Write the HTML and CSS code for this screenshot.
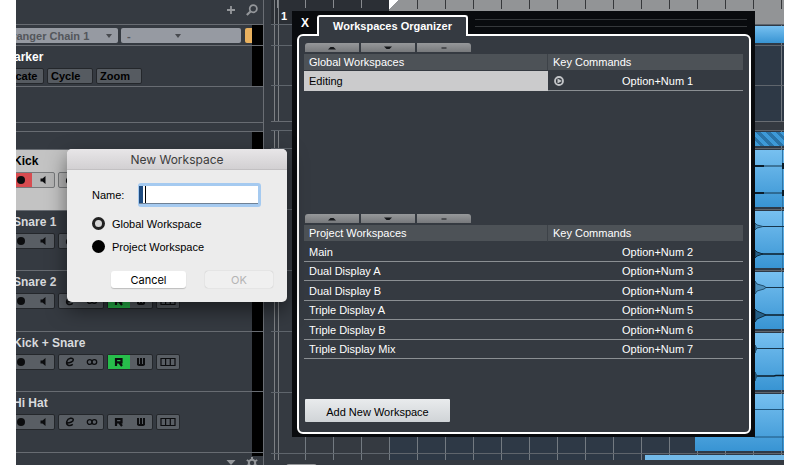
FILE: index.html
```
<!DOCTYPE html>
<html lang="en">
	<head>
		<meta charset="utf-8">
		<title>Workspaces Organizer</title>
		<link rel="stylesheet" href="styles.css">
	</head>
	<body>
		<svg class="symbols" aria-hidden="true">
			<symbol id="rec" viewBox="0 0 12 12"><circle cx="6" cy="6" r="4"/></symbol>
			<symbol id="speaker" viewBox="0 0 12 12"><path d="M3.500 4.500h2L8.500 2v8L5.500 7.500h-2z"/></symbol>
			<symbol id="edit" viewBox="0 0 12 12"><path d="M2.800 7C6 6.800 9.600 5.600 9.300 3.600C8.800 1.400 4 1.800 2.800 5.400C1.800 9.600 5.500 10.600 8.800 8.400" fill="none" stroke="currentColor" stroke-width="1.500"/></symbol>
			<symbol id="stereo" viewBox="0 0 12 12"><circle cx="3.700" cy="6" r="2.400" fill="none" stroke="currentColor" stroke-width="1.300"/><circle cx="8.300" cy="6" r="2.400" fill="none" stroke="currentColor" stroke-width="1.300"/></symbol>
			<symbol id="read" viewBox="0 0 12 12"><path d="M3 10V3h5.500v3.300H3M6 6.300L9 10" fill="none" stroke="currentColor" stroke-width="2.200"/></symbol>
			<symbol id="write" viewBox="0 0 12 12"><path d="M3 2v6.500L4 9h4l1-.5V2M6 2v7" fill="none" stroke="currentColor" stroke-width="2"/></symbol>
			<symbol id="lanes" viewBox="0 0 16 12"><path d="M1 2.500h14v7H1zM5.600 2.500v7M10.300 2.500v7" fill="none" stroke="currentColor" stroke-width="1.200"/></symbol>
			<symbol id="up" viewBox="0 0 10 6"><path d="M1 4.500L3.500 2h3L9 4.500z"/></symbol>
			<symbol id="down" viewBox="0 0 10 6"><path d="M1 1.500h8L6.500 4h-3z"/></symbol>
			<symbol id="minus" viewBox="0 0 10 6"><path d="M2.500 2.500h5v1h-5z"/></symbol>
		</svg>

		<div class="app">
			<aside class="tracklist">
				<div class="tl-head">
					<button class="tool" aria-label="Add track"><svg viewBox="0 0 12 12"><path d="M6 2v8M2 6h8" stroke="currentColor" stroke-width="1.800"/></svg></button>
					<button class="tool" aria-label="Find track"><svg viewBox="0 0 12 12"><circle cx="7.300" cy="4.700" r="3.600" fill="none" stroke="currentColor" stroke-width="1.700"/><path d="M4.500 7.500L.8 11" stroke="currentColor" stroke-width="2.200"/></svg></button>
				</div>
				<div class="strip arranger">
					<select class="chain" aria-label="Arranger chain"><option>Arranger Chain 1</option></select>
					<select class="chain-item" aria-label="Arranger item"><option>-</option></select>
					<button class="arranger-on" aria-label="Activate arranger"></button>
				</div>
				<div class="strip marker">
					<h2>Marker</h2>
					<div class="marker-buttons">
						<button>Locate</button>
						<button>Cycle</button>
						<button>Zoom</button>
					</div>
				</div>
				<div class="strip spare"></div>
				<div class="divider"></div>
				<div class="strip folder"></div>
				<div class="tracks">
					<div class="track selected">
						<h2>Kick</h2>
						<div class="controls">
							<span class="group"><button class="armed" aria-label="Record"><svg><use href="#rec"/></svg></button><button aria-label="Monitor"><svg><use href="#speaker"/></svg></button></span>
							<span class="group"><button aria-label="Edit"><svg><use href="#edit"/></svg></button><button aria-label="Stereo"><svg><use href="#stereo"/></svg></button></span>
						</div>
					</div>
					<div class="track">
						<h2>Snare 1</h2>
						<div class="controls">
							<span class="group"><button aria-label="Record"><svg><use href="#rec"/></svg></button><button aria-label="Monitor"><svg><use href="#speaker"/></svg></button></span>
							<span class="group"><button aria-label="Edit"><svg><use href="#edit"/></svg></button><button aria-label="Stereo"><svg><use href="#stereo"/></svg></button></span>
						</div>
					</div>
					<div class="track">
						<h2>Snare 2</h2>
						<div class="controls">
							<span class="group"><button aria-label="Record"><svg><use href="#rec"/></svg></button><button aria-label="Monitor"><svg><use href="#speaker"/></svg></button></span>
							<span class="group"><button aria-label="Edit"><svg><use href="#edit"/></svg></button><button aria-label="Stereo"><svg><use href="#stereo"/></svg></button></span>
							<span class="group"><button class="reading" aria-label="Read"><svg><use href="#read"/></svg></button><button aria-label="Write"><svg><use href="#write"/></svg></button></span>
							<span class="group"><button aria-label="Lanes"><svg class="wide"><use href="#lanes"/></svg></button></span>
						</div>
					</div>
					<div class="track">
						<h2>Kick + Snare</h2>
						<div class="controls">
							<span class="group"><button aria-label="Record"><svg><use href="#rec"/></svg></button><button aria-label="Monitor"><svg><use href="#speaker"/></svg></button></span>
							<span class="group"><button aria-label="Edit"><svg><use href="#edit"/></svg></button><button aria-label="Stereo"><svg><use href="#stereo"/></svg></button></span>
							<span class="group"><button class="reading" aria-label="Read"><svg><use href="#read"/></svg></button><button aria-label="Write"><svg><use href="#write"/></svg></button></span>
							<span class="group"><button aria-label="Lanes"><svg class="wide"><use href="#lanes"/></svg></button></span>
						</div>
					</div>
					<div class="track">
						<h2>Hi Hat</h2>
						<div class="controls">
							<span class="group"><button aria-label="Record"><svg><use href="#rec"/></svg></button><button aria-label="Monitor"><svg><use href="#speaker"/></svg></button></span>
							<span class="group"><button aria-label="Edit"><svg><use href="#edit"/></svg></button><button aria-label="Stereo"><svg><use href="#stereo"/></svg></button></span>
							<span class="group"><button aria-label="Read"><svg><use href="#read"/></svg></button><button aria-label="Write"><svg><use href="#write"/></svg></button></span>
							<span class="group"><button aria-label="Lanes"><svg class="wide"><use href="#lanes"/></svg></button></span>
						</div>
					</div>
				</div>
				<div class="tl-foot">
					<button class="tool" aria-label="Track scale"><svg viewBox="0 0 12 12"><path d="M1.500 3h9L6 8z"/></svg></button>
					<button class="tool" aria-label="Settings"><svg viewBox="0 0 12 12"><circle cx="6" cy="6" r="3.200" fill="none" stroke="currentColor" stroke-width="2"/><path d="M6 0v3M6 9v3M.8 3l2.600 1.500M8.600 7.500L11.200 9M.8 9l2.600-1.500M8.600 4.500L11.200 3" stroke="currentColor" stroke-width="2"/></svg></button>
				</div>
			</aside>

			<main class="arrange">
				<div class="ruler">
					<div class="ruler-pre"><span>1</span></div>
					<div class="ruler-range"></div>
				</div>
				<div class="lane arranger"><div class="clip plain"></div></div>
				<div class="lane marker"></div>
				<div class="lane spare"></div>
				<div class="divider"></div>
				<div class="lane folder"><div class="clip hatched"></div></div>
				<div class="tracks">
					<div class="lane"><div class="clip"><svg viewBox="0 0 30 57"><path d="M28.500 0v57" stroke="#2f76a8"/><path d="M0 16h30M0 43h30" stroke="#17364c"/><path d="M0 15h10v2H0zM0 42h10v2H0zM28 13h2v6h-2zM28 40h2v6h-2z"/></svg></div></div>
					<div class="lane"><div class="clip"><svg viewBox="0 0 30 57"><path d="M28.500 0v57" stroke="#2f76a8"/><path d="M0 15.500h30" stroke="#17364c"/><path d="M0 43h30" stroke="#0b1c29" stroke-width="1.500"/><path d="M1 12l2 2 6 1.500-6 1.500-2 2z" fill="#4e91bd" stroke="#214e6c"/><path d="M1 39l2 2 6 2-6 2-2 2z" fill="#255f87" stroke="#102a3c"/></svg></div></div>
					<div class="lane"><div class="clip"><svg viewBox="0 0 30 57"><path d="M28.500 0v57" stroke="#2f76a8"/><path d="M0 15.500h30" stroke="#17364c"/><path d="M0 43h30" stroke="#0b1c29" stroke-width="1.500"/><path d="M1 9l2 3 7 2 2 1.500-2 1.500-7 2-2 3z" fill="#4e91bd" stroke="#214e6c"/><path d="M1 37l2 2 7 3 2 1-2 1-7 3-2 3z" fill="#255f87" stroke="#102a3c"/></svg></div></div>
					<div class="lane"><div class="clip"><svg viewBox="0 0 30 57"><path d="M28.500 0v57" stroke="#2f76a8"/><path d="M0 15.500h30" stroke="#17364c"/><path d="M0 43h20l2-.5h8" fill="none" stroke="#0b1c29" stroke-width="1.500"/><path d="M1 12l1 2 1 1.500-1 1.500-1 3zM1 39l1 2 1 2-1 2-1 3z" fill="#255f87" stroke="#214e6c"/></svg></div></div>
					<div class="lane"><div class="clip"><svg viewBox="0 0 30 57"><path d="M28.500 0v57" stroke="#2f76a8"/><path d="M0 15.500h30M0 43h30" stroke="#1f557c"/></svg></div></div>
				</div>
				<div class="overview"><div class="overview-range"></div></div>
				<div class="scroll"><div class="thumb"></div></div>
			</main>

			<section class="organizer">
				<header class="titlebar">
					<button class="close" aria-label="Close">X</button>
					<h1>Workspaces Organizer</h1>
					<div class="grip"></div>
				</header>
				<div class="frame">
					<div class="list global">
						<div class="list-tools">
							<button aria-label="Move up"><svg><use href="#up"/></svg></button>
							<button aria-label="Move down"><svg><use href="#down"/></svg></button>
							<button aria-label="Remove"><svg><use href="#minus"/></svg></button>
						</div>
						<table>
							<colgroup><col class="col-name"><col class="col-state"><col></colgroup>
							<thead>
								<tr><th class="name">Global Workspaces</th><th colspan="2">Key Commands</th></tr>
							</thead>
							<tbody>
								<tr class="current"><td>Editing</td><td class="state"><svg viewBox="0 0 12 12"><circle cx="6" cy="6" r="4" fill="none" stroke="#c3c5c8" stroke-width="1.800"/><path d="M4.500 3.500l4.500 2.500-4.500 2.500z" fill="#c3c5c8"/></svg></td><td>Option+Num 1</td></tr>
							</tbody>
						</table>
					</div>
					<div class="list">
						<div class="list-tools">
							<button aria-label="Move up"><svg><use href="#up"/></svg></button>
							<button aria-label="Move down"><svg><use href="#down"/></svg></button>
							<button aria-label="Remove"><svg><use href="#minus"/></svg></button>
						</div>
						<table>
							<colgroup><col class="col-name"><col class="col-state"><col></colgroup>
							<thead>
								<tr><th class="name">Project Workspaces</th><th colspan="2">Key Commands</th></tr>
							</thead>
							<tbody>
								<tr><td>Main</td><td class="state"></td><td>Option+Num 2</td></tr>
								<tr><td>Dual Display A</td><td class="state"></td><td>Option+Num 3</td></tr>
								<tr><td>Dual Display B</td><td class="state"></td><td>Option+Num 4</td></tr>
								<tr><td>Triple Display A</td><td class="state"></td><td>Option+Num 5</td></tr>
								<tr><td>Triple Display B</td><td class="state"></td><td>Option+Num 6</td></tr>
								<tr><td>Triple Display Mix</td><td class="state"></td><td>Option+Num 7</td></tr>
							</tbody>
						</table>
					</div>
					<button class="add">Add New Workspace</button>
				</div>
			</section>

			<form class="dialog">
				<h1>New Workspace</h1>
				<div class="dialog-body">
					<div class="field">
						<label for="wsName">Name:</label>
						<input type="text" id="wsName">
					</div>
					<label class="choice"><input type="radio" name="scope" checked>Global Workspace</label>
					<label class="choice"><input type="radio" name="scope">Project Workspace</label>
					<div class="actions">
						<button type="button">Cancel</button>
						<button type="button" disabled>OK</button>
					</div>
				</div>
			</form>
		</div>
	</body>
</html>
```

FILE: styles.css
```
* {
	box-sizing: border-box;
}

body {
	margin: 0;
	padding: 0 16px;
	background: #fff;
	font-family: "Liberation Sans", Arial, sans-serif;
	font-size: 11px;
	color: #fff;
}

h1, h2 {
	margin: 0;
}

button, select, input {
	font: inherit;
	color: inherit;
	margin: 0;
	padding: 0;
	border: 0;
	border-radius: 0;
	background: none;
	appearance: none;
}

svg {
	display: block;
	fill: currentColor;
}

.symbols {
	position: absolute;
	width: 0;
	height: 0;
}

.app {
	position: relative;
	display: flex;
	height: 100vh;
	min-height: 465px;
	overflow: hidden;
	background: #353a41;
}

/* track list */
.tracklist {
	display: flex;
	flex-direction: column;
	flex: none;
	width: 248px;
	overflow: hidden;
	border-right: 1px solid #6a6e74;
}

.tl-head, .tl-foot {
	display: flex;
	justify-content: flex-end;
	gap: 9px;
	padding: 4px 5px 0 0;
	overflow: hidden;
}

.tl-head {
	height: 24px;
}

.tl-foot {
	height: 12px;
	background: linear-gradient(#000, #000) top right / 11px 3px no-repeat;
}

.tool {
	width: 12px;
	height: 12px;
	color: #94979b;
}

.strip, .track {
	border-top: 1px solid #686c72;
	background: linear-gradient(#000, #000) top right / 11px 100% no-repeat;
}

.arranger {
	height: 21px;
}

.marker {
	height: 41px;
}

.spare {
	height: 36px;
}

.strip.spare {
	background: none;
}

.divider {
	height: 9px;
	border-top: 1px solid #686c72;
}

.folder {
	height: 18px;
}

.strip.arranger {
	display: flex;
	gap: 3px;
	padding: 3px 11px 0 0;
	overflow: hidden;
}

/* the list is scrolled sideways, so each row begins left of the edge */
.strip.arranger, .strip.marker, .track {
	margin-left: -16px;
}

.chain, .chain-item {
	height: 15px;
	border-radius: 2px;
	background: url("data:image/svg+xml,%3Csvg xmlns='http://www.w3.org/2000/svg' width='8' height='5'%3E%3Cpath d='M1 0h6L4 4z' fill='%23484b50'/%3E%3C/svg%3E") no-repeat #969aa2;
	color: #53565b;
	font-weight: bold;
}

.chain {
	width: 118px;
	background-position: 105px 6px;
}

.chain-item {
	width: 120px;
	padding-left: 6px;
	background-position: 53px 6px;
}

.arranger-on {
	flex: none;
	width: 7px;
	height: 15px;
	margin-left: 1px;
	border-radius: 2px 0 0 2px;
	background: #e9b15f;
}

h2 {
	font-size: 12px;
	line-height: 16px;
}

.strip.marker {
	padding: 3px 0 0 4px;
}

.marker-buttons {
	display: flex;
	gap: 3px;
	margin: 3px 0 0 -6px;
}

.marker-buttons button {
	width: 46px;
	height: 16px;
	padding-left: 3px;
	border: 1px solid #24272b;
	border-radius: 2px;
	background: #565b61;
	color: #000;
	font-weight: bold;
	text-align: left;
}

.tracks {
	display: flex;
	flex-direction: column;
	flex: 1;
}

.tracks > * {
	flex: 1;
}

.track {
	padding: 3px 0 0 13px;
	color: #d9dadd;
}

.track:last-child {
	border-bottom: 1px solid #686c72;
}

.track.selected {
	background-color: #c3c3c3;
	color: #000;
}

.controls {
	display: flex;
	gap: 3px;
	margin: 3px 0 0 -6px;
	color: #0c0d0f;
}

.group {
	display: flex;
	border: 1px solid #24272b;
	border-radius: 2px;
	background: #595e64;
}

.group:first-child {
	padding-left: 2px;
}

.group button {
	display: flex;
	align-items: center;
	justify-content: center;
	width: 22px;
	height: 14px;
}

.group svg {
	width: 12px;
	height: 12px;
}

.group svg.wide {
	width: 16px;
}

.group .reading {
	background: #27bd4b;
}

.selected .group {
	border-color: #77797b;
	background: #b5b5b5;
}

.group .armed {
	background: #d84c50;
}

/* arrange area */
.arrange {
	display: flex;
	flex-direction: column;
	flex: 1;
	margin-left: 7px;
}

.ruler {
	display: flex;
	height: 24px;
}

.ruler-pre {
	width: 118px;
	padding: 10px 0 0 10px;
	background:
		linear-gradient(90deg, transparent 3px, #7d8084 3px 4px, transparent 4px 7px, #7d8084 7px 8px, transparent 8px) no-repeat,
		linear-gradient(90deg, #888b8f 1px, transparent 1px) 34px 0 / 28px 8px repeat-x,
		#2b2f35;
	font-weight: bold;
}

.ruler-range {
	flex: 1;
	background:
		linear-gradient(135deg, #fff 7px, transparent 7px) no-repeat,
		linear-gradient(90deg, #35373a 1px, transparent 1px) 0 0 / 28px 9px repeat-x,
		#929496;
}

.lane {
	display: flex;
	justify-content: flex-end;
	border-top: 1px solid #5f656c;
}

.lane, .overview {
	background:
		linear-gradient(90deg, #353a41 3px, #7d8084 3px 4px, #353a41 4px 7px, #7d8084 7px 8px, #353a41 8px) 0 0 / 30px 100% no-repeat,
		linear-gradient(90deg, #737a81 1px, transparent 1px) 34px 0 / 28px 100% repeat-x,
		linear-gradient(90deg, transparent 118px, #2e3946 118px);
}

.clip {
	display: flex;
	justify-content: flex-end;
	width: 89px;
	margin: 1px 0 2px;
	background: linear-gradient(#77c0f0, #3894d3);
	color: #0b1c29;
}

.clip.hatched {
	background: repeating-linear-gradient(45deg, #3d9ad8 0 4px, #2a74a8 4px 7px);
}

.clip svg {
	width: 30px;
	height: 57px;
}

.overview {
	display: flex;
	justify-content: flex-end;
	height: 7px;
	border-top: 1px solid #5f656c;
}

.overview-range {
	width: 139px;
	height: 5px;
	margin-top: 1px;
	background: #72b9e8;
}

.scroll {
	height: 5px;
	padding: 4px 0 0 15px;
}

.thumb {
	width: 31px;
	height: 8px;
	border-radius: 3px;
	background: #96989b;
}

/* organizer window */
.organizer {
	position: absolute;
	top: 11px;
	right: 29px;
	bottom: 28px;
	left: 276px;
	display: flex;
	flex-direction: column;
	padding: 4px 4px 3px 5px;
	background: #090b0e;
}

.titlebar {
	display: flex;
	flex: none;
	height: 19px;
}

.close {
	width: 20px;
	padding: 0 4px 3px 0;
	font-size: 12px;
	font-weight: bold;
}

.titlebar h1 {
	position: relative;
	height: 21px;
	padding: 0 14px;
	border: 2px solid #fff;
	border-bottom: 0;
	border-radius: 3px 3px 0 0;
	background: #353a41;
	font-size: 11px;
	line-height: 18px;
}

.grip {
	flex: 1;
	height: 8px;
	margin: 4px 4px 0 7px;
	border: 1px solid #35383b;
	border-width: 1px 0;
}

.frame {
	display: flex;
	flex-direction: column;
	align-items: flex-start;
	flex: 1;
	padding: 7px 6px 10px 5px;
	border: 2px solid #fff;
	border-radius: 6px;
	background: #353a41;
}

.list {
	width: 100%;
}

.list.global {
	min-height: 171px;
}

.list-tools {
	display: flex;
	gap: 2px;
	margin: 0 0 2px 1px;
}

.list-tools button {
	display: flex;
	justify-content: center;
	align-items: center;
	width: 54px;
	height: 9px;
	background: linear-gradient(#96989a, #77797c);
	color: #15171a;
}

.list-tools button:first-child {
	border-top-left-radius: 3px;
}

.list-tools button:last-child {
	border-top-right-radius: 3px;
}

.list-tools svg {
	width: 10px;
	height: 6px;
}

table {
	width: 100%;
	border-spacing: 0;
	table-layout: fixed;
}

.col-name {
	width: 244px;
}

.col-state {
	width: 74px;
}

th, td {
	padding: 0 0 0 5px;
	text-align: left;
	font-weight: normal;
}

th {
	height: 17px;
	border-bottom: 1px solid #353a41;
	background: #4d5257;
}

th.name {
	border-right: 1px solid #3d4248;
}

td {
	height: 20px;
	border-bottom: 1px solid #8b8f93;
}

tr:nth-child(even) td {
	height: 19px;
}

td.state + td {
	padding-left: 0;
}

td.state svg {
	width: 12px;
	height: 12px;
}

.current td:first-child {
	border-color: #cbcbcc;
	background: #cbcbcc;
	color: #000;
}

.add {
	width: 145px;
	height: 23px;
	margin: auto 0 0 1px;
	padding-top: 3px;
	border-radius: 1px;
	background: linear-gradient(#e9ebed, #d0d4d7);
	color: #000;
}

/* new workspace dialog */
.dialog {
	position: absolute;
	top: 149px;
	left: 51px;
	width: 220px;
	overflow: hidden;
	border-radius: 5px;
	background: #ececec;
	box-shadow: 0 8px 20px rgba(0,0,0,0.5);
	color: #000;
}

.dialog h1 {
	height: 21px;
	border-bottom: 1px solid #c2c0c2;
	background: linear-gradient(#e8e6e8, #d2d0d2);
	color: #3c3c3c;
	font-family: Inter, sans-serif;
	font-size: 12px;
	font-weight: normal;
	line-height: 21px;
	text-align: center;
}

.dialog-body {
	display: flex;
	flex-direction: column;
	padding: 13px 14px 14px 25px;
}

.field {
	display: flex;
	align-items: center;
	gap: 14px;
	margin-bottom: 5px;
}

/* focus ring, the selected edge and the caret */
.field input {
	width: 123px;
	height: 24px;
	padding-left: 8px;
	border: 3px solid #a5caf0;
	border-left-width: 1px;
	border-radius: 3px;
	background: linear-gradient(90deg, #1f4c80 4px, #fff 4px 6px, #000 6px 7px, #fff 7px);
	box-shadow: inset 0 -1px #6f8195;
}

.choice {
	display: flex;
	align-items: center;
	gap: 7px;
	height: 23px;
}

.choice input {
	width: 13px;
	height: 13px;
	border-radius: 50%;
	background: #000;
}

.choice input:checked {
	border: 3px solid #222;
	background: #d6d6d6;
}

.actions {
	display: flex;
	justify-content: space-between;
	margin: 13px 0 0 19px;
}

.actions button {
	width: 75px;
	height: 17px;
	border-radius: 3px;
	background: #fff;
	box-shadow: 0 1px 1px rgba(0,0,0,0.2);
	font-family: Inter, sans-serif;
}

.actions button:disabled {
	width: 68px;
	background: #f0f0f0;
	box-shadow: 0 0 1px rgba(0,0,0,0.3);
	color: #b4b4b4;
}
```
